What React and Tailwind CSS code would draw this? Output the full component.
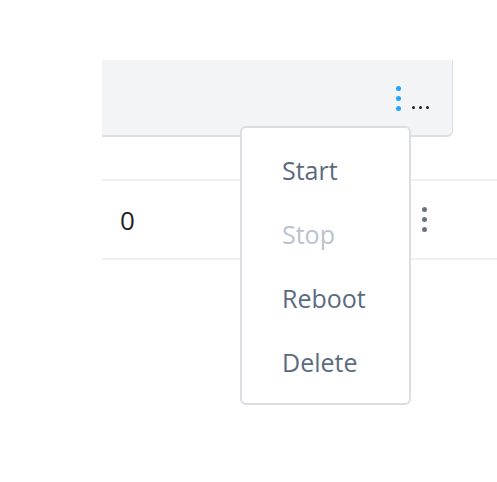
export default function App() {
  const items = [
    { label: 'Start', disabled: false },
    { label: 'Stop', disabled: true },
    { label: 'Reboot', disabled: false },
    { label: 'Delete', disabled: false },
  ];

  return (
    <div className="relative h-[482px] w-[497px] overflow-hidden bg-white font-['Open_Sans',sans-serif]">
      <div className="pl-[102px] pt-[60px]">
        {/* header panel */}
        <div className="mr-[44px] flex h-[77px] items-center justify-end rounded-br-md border-b-2 border-r border-[#dcdee1] bg-[#f3f4f6] pr-[23px]">
          <div className="mt-[2px] flex flex-col gap-[5px]">
            <span className="h-[5px] w-[5px] rounded-full bg-[#1ea7fd]" />
            <span className="h-[5px] w-[5px] rounded-full bg-[#1ea7fd]" />
            <span className="h-[5px] w-[5px] rounded-full bg-[#1ea7fd]" />
          </div>
          <div className="ml-[11px] mt-[20px] flex gap-[4px]">
            <span className="h-[3px] w-[3px] rounded-full bg-[#222]" />
            <span className="h-[3px] w-[3px] rounded-full bg-[#222]" />
            <span className="h-[3px] w-[3px] rounded-full bg-[#222]" />
          </div>
        </div>

        {/* table rows */}
        <div className="mt-[42px] border-t-2 border-[#eef0f2]">
          <div className="flex h-[79px] items-center border-b-2 border-[#eef0f2]">
            <span className="ml-[18px] text-[26px] leading-none text-[#1f2329]">0</span>
            <div className="ml-auto mr-[70px] flex flex-col gap-[5px]">
              <span className="h-[5px] w-[5px] rounded-full bg-[#6b7280]" />
              <span className="h-[5px] w-[5px] rounded-full bg-[#6b7280]" />
              <span className="h-[5px] w-[5px] rounded-full bg-[#6b7280]" />
            </div>
          </div>
        </div>
      </div>

      {/* dropdown menu */}
      <div className="absolute left-[240px] top-[126px] w-[171px] rounded-md border-2 border-[#dadde1] bg-white pb-[9px] pt-[10px]">
        {items.map((item) => (
          <div
            key={item.label}
            className={`flex h-[64px] items-center pl-[40px] text-[25px] leading-none ${
              item.disabled ? 'text-[#b9c3cd]' : 'text-[#5b6b80]'
            }`}
          >
            {item.label}
          </div>
        ))}
      </div>
    </div>
  );
}
